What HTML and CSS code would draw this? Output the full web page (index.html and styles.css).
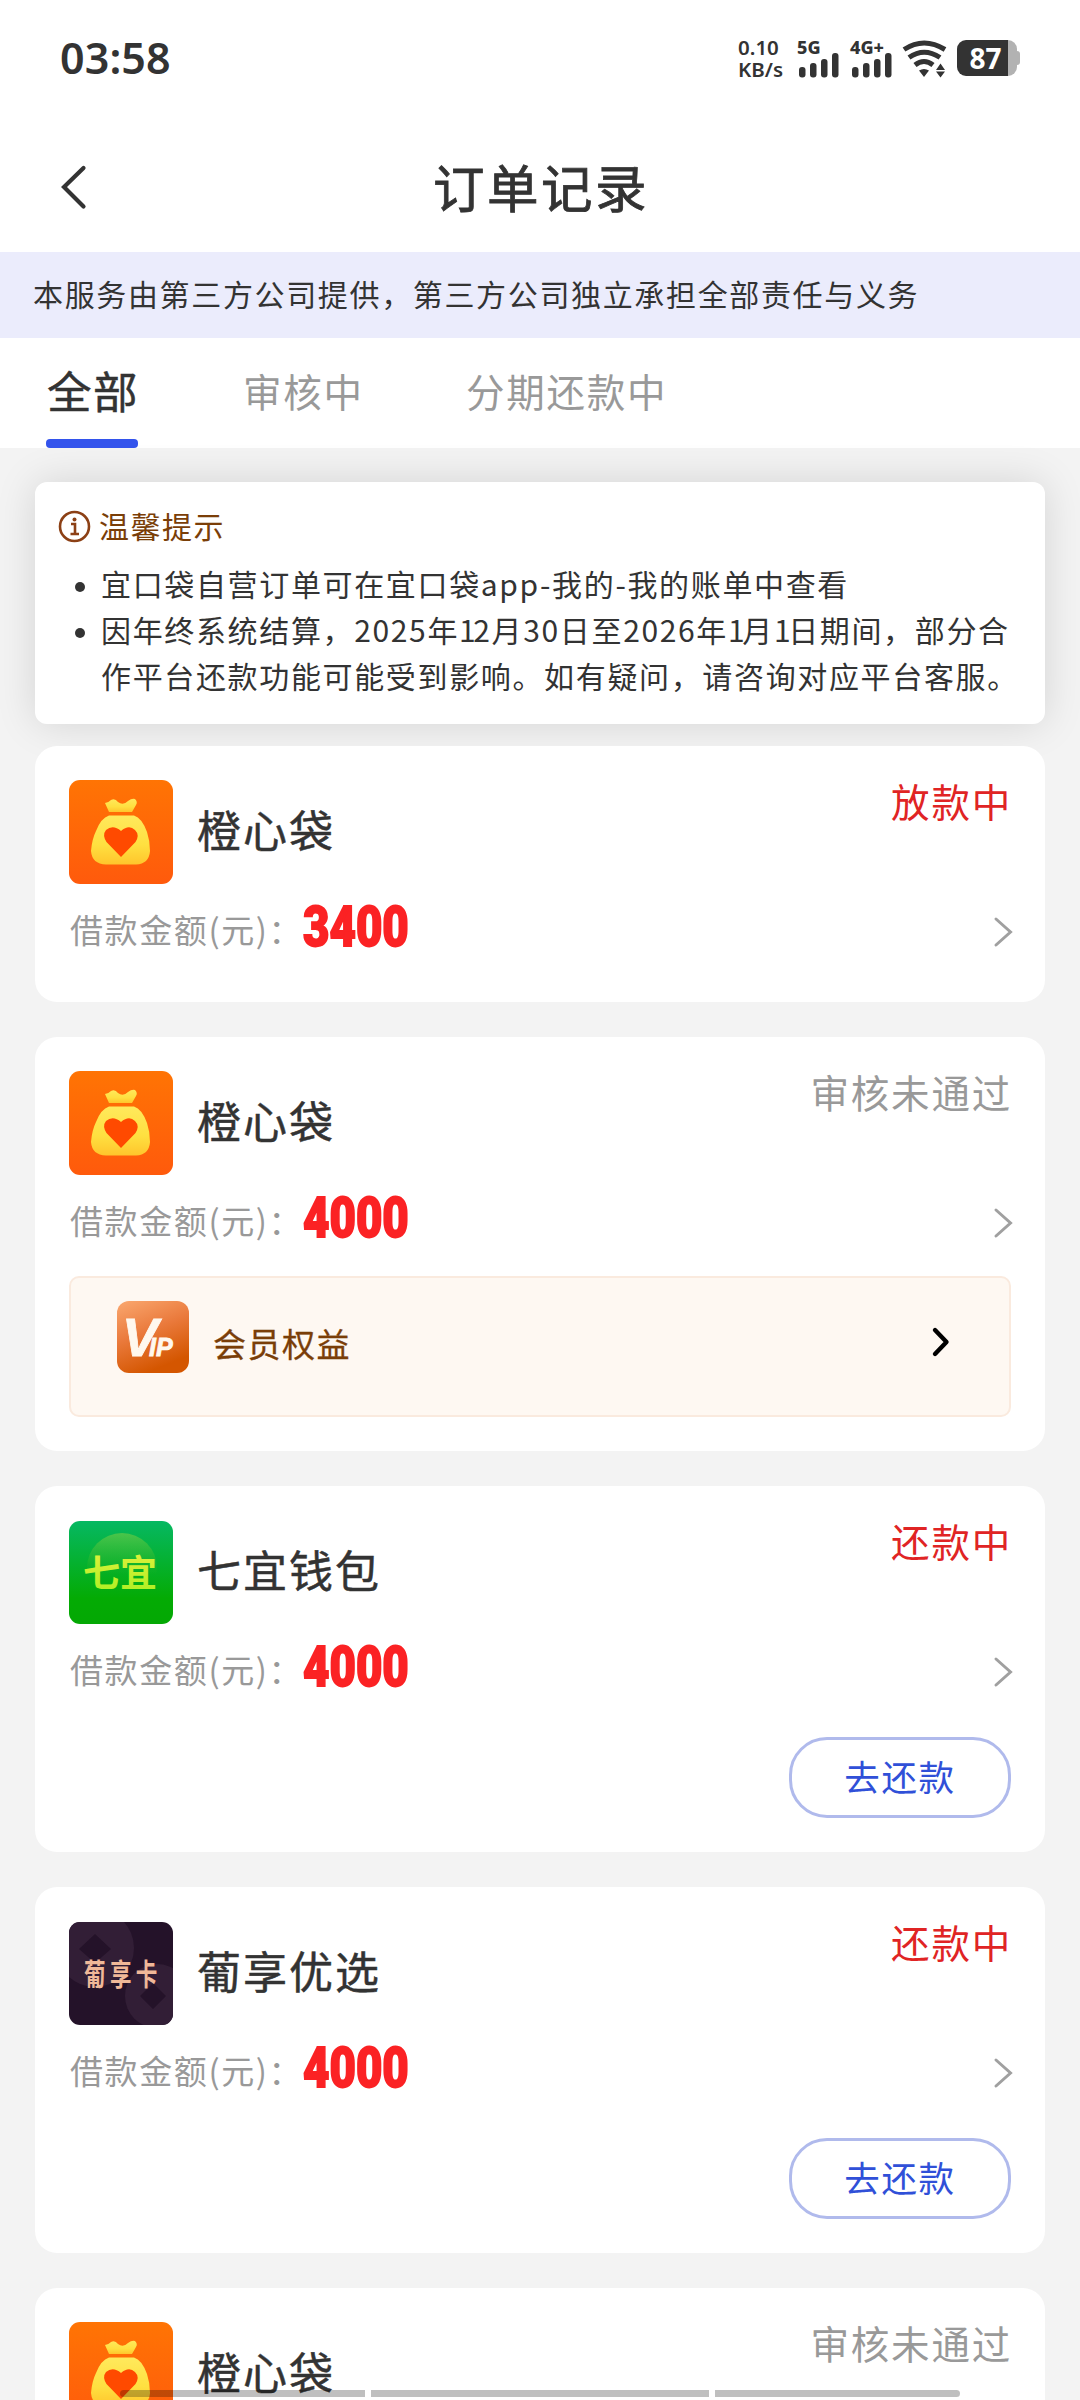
FILE: index.html
```html
<!DOCTYPE html>
<html lang="zh-CN">
<head>
<meta charset="utf-8">
<title>订单记录</title>
<link rel="stylesheet" href="styles.css">
</head>
<body>
<svg class="defs" width="0" height="0" aria-hidden="true">
  <defs>
    <linearGradient id="orange" x1="0" y1="0" x2="0" y2="1"><stop offset="0" stop-color="#ff7404"/><stop offset="1" stop-color="#ff5a0c"/></linearGradient>
    <linearGradient id="gold" x1="0" y1="0" x2="0" y2="1"><stop offset="0" stop-color="#ffe95c"/><stop offset=".6" stop-color="#ffe040"/><stop offset="1" stop-color="#ffc52c"/></linearGradient>
    <linearGradient id="green" x1="0" y1="0" x2="0" y2="1"><stop offset="0" stop-color="#06b862"/><stop offset=".75" stop-color="#04ab04"/><stop offset="1" stop-color="#04a804"/></linearGradient>
    <linearGradient id="glow" x1="0" y1="0" x2="0" y2="1"><stop offset="0" stop-color="#5cc848" stop-opacity=".8"/><stop offset=".6" stop-color="#3cb820" stop-opacity="0"/></linearGradient>
    <linearGradient id="lime" x1="0" y1="0" x2="0" y2="1"><stop offset="0" stop-color="#e8f040"/><stop offset="1" stop-color="#a8f020"/></linearGradient>
    <linearGradient id="copper" x1="0" y1="0" x2=".4" y2="1"><stop offset="0" stop-color="#faa870"/><stop offset=".5" stop-color="#ea7a3c"/><stop offset="1" stop-color="#d45600"/></linearGradient>
    <symbol id="bag" viewBox="0 0 104 104">
      <rect width="104" height="104" rx="11" fill="url(#orange)"/>
      <path d="M40 32L36 23Q39 23 42 20Q46 18 49 22Q54 26 59 21Q63 18 66 19Q69 22 67 25L63 32Z" fill="url(#gold)"/>
      <path d="M40 35.500H65Q73 38 78 52Q81 61 81 71Q80 84 67 84.500H37Q23 84 22 71Q23 59 27 51Q32 38 40 35.500Z" fill="url(#gold)"/>
      <path d="M52 77L37.500 62Q33 55 37 50Q44 44 52 51Q60 44 66 50Q71 55 66.500 62Z" fill="#ff4a00"/>
    </symbol>
    <symbol id="next" viewBox="0 0 20 32"><path d="M3 3L17.500 16L3 29" fill="none" stroke="#a0a0a0" stroke-width="3" stroke-linecap="round"/></symbol>
  </defs>
</svg>
<div class="screen">
  <div class="statusbar">
    <div class="clock">03:58</div>
    <div class="indicators">
      <div class="speed"><span>0.10</span><span>KB/s</span></div>
      <div class="signal"><span>5G</span>
        <svg width="40" height="26" viewBox="0 0 40 26" fill="#333"><rect y="15" width="6.500" height="10.500" rx="3"/><rect x="11" y="11" width="6.500" height="14.500" rx="3"/><rect x="22" y="7" width="6.500" height="18.500" rx="3"/><rect x="33" y="1" width="6.500" height="24.500" rx="3"/></svg></div>
      <div class="signal second"><span>4G+</span>
        <svg width="40" height="26" viewBox="0 0 40 26" fill="#333"><rect y="15" width="6.500" height="10.500" rx="3"/><rect x="11" y="11" width="6.500" height="14.500" rx="3"/><rect x="22" y="7" width="6.500" height="18.500" rx="3"/><rect x="33" y="1" width="6.500" height="24.500" rx="3"/></svg></div>
      <svg class="wifi" width="46" height="38" viewBox="0 0 46 38"><g fill="none" stroke="#333" stroke-width="5"><path d="M2 9.500Q22 -3.500 43 9.500"/><path d="M7 17.500Q22 7 38 17.500"/><path d="M13 25Q22 18 31 25"/></g><path d="M17 30.500Q22 27.500 27 30.500L22 37Z M34 30L38.500 23.500L43 30Z M34 31.500H43L38.500 37.500Z" fill="#333"/></svg>
      <div class="battery"><span>87</span></div>
    </div>
  </div>
  <div class="navbar">
    <svg class="back" width="28" height="46" viewBox="0 0 28 46"><path d="M23.500 4L4 23L23.500 42.500" fill="none" stroke="#333" stroke-width="4.200" stroke-linecap="round"/></svg>
    <h1>订单记录</h1>
  </div>
  <div class="notice">本服务由第三方公司提供，第三方公司独立承担全部责任与义务</div>
  <div class="tabs">
    <div class="tab active">全部</div>
    <div class="tab">审核中</div>
    <div class="tab">分期还款中</div>
  </div>
  <div class="tips">
    <div class="tips-title">
      <svg width="33" height="33" viewBox="0 0 33 33"><circle cx="16.500" cy="16.500" r="14.500" fill="none" stroke="#8c4015" stroke-width="2.600"/><circle cx="16.500" cy="9.500" r="2" fill="#8c4015"/><path d="M13 14H17V23.500M12.500 24H21" fill="none" stroke="#8c4015" stroke-width="2.600"/></svg>
      <span>温馨提示</span>
    </div>
    <ul>
      <li>宜口袋自营订单可在宜口袋app-我的-我的账单中查看</li>
      <li>因年终系统结算，2025年<i>1</i>2月30日至2026年<i>1</i>月<i>1</i>日期间，部分合<br>作平台还款功能可能受到影响。如有疑问，请咨询对应平台客服。</li>
    </ul>
  </div>
  <div class="orders">
    <div class="card">
      <div class="head"><svg class="logo"><use href="#bag"/></svg><div class="name">橙心袋</div><div class="state red">放款中</div></div>
      <div class="sum"><span class="label">借款金额(元)<i>：</i></span><b>3400</b><svg class="next"><use href="#next"/></svg></div>
    </div>
    <div class="card">
      <div class="head"><svg class="logo"><use href="#bag"/></svg><div class="name">橙心袋</div><div class="state">审核未通过</div></div>
      <div class="sum"><span class="label">借款金额(元)<i>：</i></span><b>4000</b><svg class="next"><use href="#next"/></svg></div>
      <div class="vip">
        <svg width="72" height="72" viewBox="0 0 72 72"><rect width="72" height="72" rx="12" fill="url(#copper)"/><text class="vip-text" x="5" y="55"><tspan class="big">V</tspan><tspan dx="-9">IP</tspan></text></svg>
        <span>会员权益</span>
        <svg class="go" width="20" height="32" viewBox="0 0 20 32"><path d="M4 4L15.500 16L4 28" fill="none" stroke="#000" stroke-width="4.400" stroke-linecap="round" stroke-linejoin="round"/></svg>
      </div>
    </div>
    <div class="card">
      <div class="head"><svg class="logo" viewBox="0 0 104 104"><rect y="1" width="104" height="103" rx="11" fill="url(#green)"/><circle cx="53" cy="48" r="35" fill="url(#glow)"/><text class="qiyi" x="14" y="67" fill="url(#lime)">七宜</text></svg><div class="name">七宜钱包</div><div class="state red">还款中</div></div>
      <div class="sum"><span class="label">借款金额(元)<i>：</i></span><b>4000</b><svg class="next"><use href="#next"/></svg></div>
      <div class="pay">去还款</div>
    </div>
    <div class="card">
      <div class="head"><svg class="logo" viewBox="0 0 104 104"><clipPath id="r"><rect y="1" width="104" height="103" rx="11"/></clipPath><g clip-path="url(#r)"><rect width="104" height="104" fill="#241229"/><g fill="#321e36"><circle cx="26" cy="27" r="39"/><circle cx="88" cy="75" r="32"/></g><path d="M26 13L42 28L26 42L10 28ZM84 62L97 75L84 88L71 75Z" fill="#241229"/></g><text class="puxiang" transform="translate(15 64) scale(.72 1)">葡享卡</text></svg><div class="name">葡享优选</div><div class="state red">还款中</div></div>
      <div class="sum"><span class="label">借款金额(元)<i>：</i></span><b>4000</b><svg class="next"><use href="#next"/></svg></div>
      <div class="pay">去还款</div>
    </div>
    <div class="card">
      <div class="head"><svg class="logo"><use href="#bag"/></svg><div class="name">橙心袋</div><div class="state">审核未通过</div></div>
    </div>
  </div>
  <div class="gesture"><i></i><i></i><i></i></div>
</div>
</body>
</html>
```
FILE: styles.css
```css
* { box-sizing: border-box; }
body { margin: 0; font-family: "Noto Sans CJK SC", sans-serif; color: #333; background: #f3f3f3; }
svg { display: block; flex: none; }
i { font-style: normal; }
.defs { position: absolute; }
.screen { position: relative; width: 1080px; height: 2400px; overflow: hidden; white-space: nowrap; }

.statusbar { height: 116px; background: #fff; display: flex; justify-content: space-between; padding: 0 63px 0 60px; font-family: "Noto Sans", sans-serif; font-weight: 600; }
.clock { font-size: 43px; line-height: 115px; letter-spacing: .1px; }
.indicators { display: flex; padding-top: 40px; }
.speed { width: 61px; font-size: 20.5px; line-height: 22px; margin-top: -4px; display: flex; flex-direction: column; }
.signal { width: 53px; font-size: 18px; line-height: 18px; font-weight: 800; }
.signal span { display: block; height: 12px; margin: -2px 0 2px -2px; }
.signal.second { width: 50px; }
.wifi { margin-right: 9px; }
.battery { position: relative; width: 60px; height: 36px; border-radius: 9px; background: linear-gradient(90deg, #333 51px, #b2b2b2 51px); color: #fff; font-size: 28px; font-weight: 700; line-height: 36px; text-align: center; padding-right: 3px; }
.battery::after { content: ""; position: absolute; right: -3px; top: 11px; width: 4px; height: 14px; border-radius: 0 3px 3px 0; background: #b2b2b2; }

.navbar { height: 136px; background: #fff; display: grid; grid-template-columns: 60px 1fr 60px; align-items: start; padding-top: 48px; }
.back { margin-left: 60px; }
.navbar h1 { margin: 0; padding-left: 2px; text-align: center; font-size: 51.5px; line-height: 43px; font-weight: 400; letter-spacing: 2.5px; -webkit-text-stroke: .8px #333; }

.notice { height: 86px; line-height: 83px; padding-left: 33px; background: #ebecfc; font-size: 30px; letter-spacing: 1.65px; }

.tabs { height: 110px; background: #fff; display: flex; padding-left: 46px; }
.tab { font-size: 38.5px; letter-spacing: 1.8px; line-height: 105px; color: #999; margin-right: 102px; }
.tab.active { position: relative; width: 92px; margin-right: 105px; padding-left: 1px; font-size: 44.5px; letter-spacing: 1.5px; line-height: 103px; color: #333; -webkit-text-stroke: .5px #333; }
.tab.active::after { content: ""; position: absolute; left: 0; bottom: 0; width: 92px; height: 9px; border-radius: 4px; background: #3353ec; }

.tips { margin: 34px 35px 0; height: 242px; background: #fff; border-radius: 12px; padding: 22px 23px; box-shadow: 0 0 40px rgba(0,0,0,.13); }
.tips-title { display: flex; align-items: center; gap: 8px; height: 44px; color: #7a3e08; font-size: 30px; letter-spacing: 1.5px; line-height: 44px; }
.tips-title span { margin-top: -3px; }
.tips ul { margin: 12px 0 0; padding: 0; list-style: none; font-size: 30px; line-height: 46px; letter-spacing: 1.65px; }
.tips li { position: relative; padding-left: 43px; }
.tips li i { letter-spacing: -2.4px; }
.tips li::before { content: ""; position: absolute; left: 17px; top: 22px; width: 10px; height: 10px; border-radius: 50%; background: #333; }

.orders { padding: 22px 35px 0; display: flex; flex-direction: column; gap: 35px; position: relative; }
.card { background: #fff; border-radius: 22px; padding: 34px; display: flex; flex-direction: column; }
.head { display: flex; height: 104px; }
.logo { width: 104px; height: 104px; }
.name { font-size: 44px; letter-spacing: 2px; line-height: 98px; margin-left: 24px; -webkit-text-stroke: .5px #333; }
.state { margin: 0 -1px 0 auto; font-size: 38.5px; letter-spacing: 1.8px; line-height: 41px; color: #999; }
.state.red { color: #e02424; }
.sum { display: flex; align-items: center; height: 81px; margin-top: 3px; }
.label { width: 234px; padding: 4px 0 0 1px; font-size: 33px; letter-spacing: 1.6px; color: #999; line-height: 81px; }
.label i { font-family: "Noto Sans CJK JP", sans-serif; }
.sum b { font-family: Roboto, sans-serif; font-weight: 900; font-size: 55px; line-height: 81px; height: 81px; color: #fb2224; -webkit-text-stroke: 1.8px #fb2224; transform: scaleX(.83); transform-origin: 0 50%; }
.next { width: 20px; height: 32px; margin: 9px -2px 0 auto; }
.vip { display: flex; height: 141px; margin-top: 17px; border: 2px solid #faeade; border-radius: 10px; background: #fef8f2; padding: 23px 58px 0 46px; color: #7a3e08; font-size: 33px; letter-spacing: 1.5px; line-height: 84px; }
.vip span { margin-left: 24px; -webkit-text-stroke: .3px #7a3e08; }
.go { margin: 25px 0 0 auto; }
.vip-text { font-family: "Liberation Sans", sans-serif; font-weight: 700; font-style: italic; font-size: 25px; fill: #fff8ee; letter-spacing: 0; stroke: #fff8ee; stroke-width: .8px; }
.vip-text .big { font-size: 54px; }
.qiyi { font-size: 37px; font-weight: 700; letter-spacing: 0; }
.puxiang { font-size: 30px; font-weight: 700; letter-spacing: 6px; fill: #f0b898; }
.pay { align-self: flex-end; width: 222px; height: 81px; margin-top: 29px; border: 3px solid #b0baec; border-radius: 38px; color: #3050d8; font-size: 35.5px; letter-spacing: 1.6px; line-height: 71px; text-align: center; }

.gesture { position: absolute; left: 120px; top: 2390px; width: 840px; height: 7px; display: grid; grid-template-columns: 245px 338px 245px; gap: 6px; border-radius: 4px; overflow: hidden; }
.gesture i { background: rgba(0,0,0,.25); }
```
